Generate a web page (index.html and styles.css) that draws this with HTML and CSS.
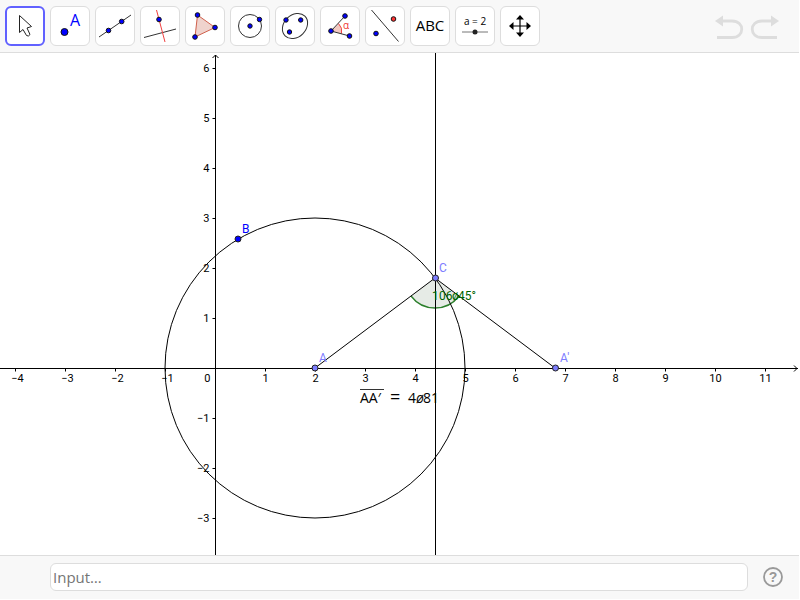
FILE: index.html
```
<!DOCTYPE html>
<html lang="en">

<head>
    <meta charset="UTF-8">
    <meta name="viewport" content="width=device-width, initial-scale=1.0">
    <title>Geometry</title>
    <link rel="stylesheet" href="styles.css">
</head>

<body>
    <header class="toolbar">
        <div class="tools">
            <button type="button" class="tool selected" aria-label="Move">
                <svg viewBox="0 0 40 40"><path d="M14.500 9.500V26.500L18 23.500L21.500 29.500Q23.500 31 25 28.500L22 22L26.500 20.500Z" fill="#fff" stroke="#222" /></svg>
            </button>
            <button type="button" class="tool" aria-label="Point">
                <svg viewBox="0 0 40 40"><circle class="dot" cx="14.500" cy="26" r="3.500" /><text class="icon-a" x="20" y="20">A</text></svg>
            </button>
            <button type="button" class="tool" aria-label="Line">
                <svg viewBox="0 0 40 40"><path class="thin" d="M4 31L36 9" /><circle class="dot" cx="13.500" cy="24.500" r="2.300" /><circle class="dot" cx="26.700" cy="15.500" r="2.300" /></svg>
            </button>
            <button type="button" class="tool" aria-label="Perpendicular line">
                <svg viewBox="0 0 40 40"><path class="thin" d="M4 31.500L36 23" /><path class="thin red" d="M16.500 4L25 36" /><circle class="dot" cx="19" cy="13.500" r="2.300" /></svg>
            </button>
            <button type="button" class="tool" aria-label="Polygon">
                <svg viewBox="0 0 40 40"><path d="M12.500 9L30 21.500L10 31Z" fill="#efd3cd" stroke="#d0604c" /><circle class="dot" cx="12.500" cy="9" r="2.300" /><circle class="dot" cx="30" cy="21.500" r="2.300" /><circle class="dot" cx="10" cy="31" r="2.300" /></svg>
            </button>
            <button type="button" class="tool" aria-label="Circle">
                <svg viewBox="0 0 40 40"><circle class="thin" cx="20" cy="20" r="11.500" /><circle class="dot" cx="20" cy="20" r="2.200" /><circle class="dot" cx="29.500" cy="13.500" r="2.200" /></svg>
            </button>
            <button type="button" class="tool" aria-label="Ellipse">
                <svg viewBox="0 0 40 40"><ellipse class="thin" cx="20" cy="20" rx="14" ry="11" transform="rotate(-45 20 20)" /><circle class="dot" cx="11" cy="14" r="2.200" /><circle class="dot" cx="25.700" cy="14" r="2.200" /><circle class="dot" cx="14.500" cy="26" r="2.200" /></svg>
            </button>
            <button type="button" class="tool" aria-label="Angle">
                <svg viewBox="0 0 40 40"><path d="M11 25L18.500 17.500A11 11 0 0 1 21.500 27.700Z" fill="#f3c9c2" /><path class="thin red" d="M18.500 17.500A11 11 0 0 1 21.500 27.700" /><path class="thin" d="M25 10L11 25L29.500 30" /><circle class="dot" cx="25" cy="10" r="2.300" /><circle class="dot" cx="11" cy="25" r="2.300" /><circle class="dot" cx="29.500" cy="30" r="2.300" /><text class="icon-alpha" x="23" y="23">α</text></svg>
            </button>
            <button type="button" class="tool" aria-label="Reflect about line">
                <svg viewBox="0 0 40 40"><path class="thin" d="M6.500 4L33.500 35.500" /><circle class="dot" cx="11" cy="27.500" r="2.300" /><circle class="dot dot-red" cx="28.500" cy="13" r="2.300" /></svg>
            </button>
            <button type="button" class="tool" aria-label="Text">
                <svg viewBox="0 0 40 40"><text class="icon-abc" x="20" y="25">ABC</text></svg>
            </button>
            <button type="button" class="tool" aria-label="Slider">
                <svg viewBox="0 0 40 40"><text class="icon-slider" x="20" y="19">a = 2</text><path d="M7 26H33" stroke="#777" /><circle cx="20" cy="26" r="2.500" fill="#222" /></svg>
            </button>
            <button type="button" class="tool" aria-label="Move graphics view">
                <svg viewBox="0 0 40 40"><path d="M20 13V27M13 20H27" stroke="#000" stroke-width="1.200" /><path d="M20 9L24 13.500H16ZM20 31L24 26.500H16ZM9 20L13.500 16V24ZM31 20L26.500 16V24Z" /></svg>
            </button>
        </div>
        <div class="history">
            <button type="button" class="history-button" aria-label="Undo">
                <svg viewBox="0 0 30 26"><path d="M8 8H18C31 8 31 24.500 18 24.500H3" fill="none" stroke="#ddd" stroke-width="2.800" /><path d="M1 8L9 2.500V13.500Z" fill="#ddd" /></svg>
            </button>
            <button type="button" class="history-button" aria-label="Redo">
                <svg viewBox="0 0 30 26"><g transform="translate(30 0) scale(-1 1)"><path d="M8 8H18C31 8 31 24.500 18 24.500H3" fill="none" stroke="#ddd" stroke-width="2.800" /><path d="M1 8L9 2.500V13.500Z" fill="#ddd" /></g></svg>
            </button>
        </div>
    </header>

    <main class="graphics">
        <svg class="view" id="view" role="img" aria-label="Graphics view">
            <!-- one unit is 50px, the origin is at 215, 315 -->
            <g id="axes"></g>
            <svg x="215" y="315" overflow="visible">
                <path d="M220 -90L196 -72A30 30 0 0 0 244 -72Z" fill="#e6ebe6" />
                <path d="M196 -72A30 30 0 0 0 244 -72" fill="none" stroke="#2b7f2b" stroke-width="1.300" />
                <circle class="shape" cx="100" cy="0" r="150" />
                <path class="shape" d="M220.500 -400V300M100 0L220 -90L340 0" />
                <text class="angle" y="-68"><tspan x="217">1</tspan><tspan x="224">06</tspan><tspan x="237">ø</tspan><tspan x="243">45°</tspan></text>
                <circle class="point" cx="100" cy="0" r="3" />
                <circle class="point" cx="340.500" cy="0" r="3" />
                <circle class="point" cx="220.500" cy="-90" r="3" />
                <circle class="point free" cx="23" cy="-129" r="3" />
                <text class="name" x="104" y="-6">A</text>
                <text class="name" x="345" y="-6">A'</text>
                <text class="name" x="224" y="-96">C</text>
                <text class="name name-free" x="27" y="-135">B</text>
                <path d="M145 21.500H169" stroke="#333" />
                <text class="distance" y="35"><tspan x="145">AA′</tspan><tspan x="175" class="equals">=</tspan><tspan x="193">4</tspan><tspan x="201" class="decimal">ø</tspan><tspan x="208">81</tspan></text>
            </svg>
        </svg>
    </main>

    <footer class="input-bar">
        <input type="text" class="command" placeholder="Input…" aria-label="Input">
        <button type="button" class="help" aria-label="Help">
            <svg viewBox="0 0 20 20"><circle cx="10" cy="10" r="9" fill="none" stroke="#999" stroke-width="1.800" /><text class="icon-help" x="10" y="15">?</text></svg>
        </button>
    </footer>

    <script src="script.js"></script>
</body>

</html>
```
FILE: styles.css
```
html,
body {
    height: 100%;
}

body {
    box-sizing: border-box;
    display: flex;
    flex-direction: column;
    margin: 0;
    padding: 0 1px 1px 0;
    font-family: Roboto, "Noto Sans", sans-serif;
    background: #fff;
    color: #000;
}

button {
    padding: 0;
    border: none;
    background: none;
}

.toolbar {
    display: flex;
    justify-content: space-between;
    align-items: center;
    padding: 6px 19px 6px 5px;
    border-bottom: 1px solid #ddd;
    background: #f8f8f8;
}

.tools {
    display: flex;
    gap: 5px;
}

.tool {
    box-sizing: border-box;
    display: grid;
    place-items: center;
    width: 40px;
    height: 40px;
    border: 1px solid #ddd;
    border-radius: 6px;
    background: #fff;
}

.tool.selected {
    border: 2px solid #6161ff;
}

.tool svg {
    display: block;
    width: 40px;
    height: 40px;
    margin: -2px;
    font-family: "Open Sans", sans-serif;
}

.thin {
    fill: none;
    stroke: #333;
    stroke-width: 1;
}

.red {
    stroke: #f04040;
}

.dot {
    fill: #00f;
    stroke: #111;
    stroke-width: 1;
}

.dot-red {
    fill: #f33;
}

.icon-a {
    font-size: 16px;
    fill: #00f;
}

.icon-alpha {
    font-size: 10px;
    fill: #f03030;
}

.icon-abc {
    font-size: 15px;
    text-anchor: middle;
}

.icon-slider {
    font-size: 10px;
    text-anchor: middle;
}

.history {
    display: flex;
    gap: 6px;
}

.history-button svg {
    display: block;
    width: 30px;
    height: 26px;
}

.graphics {
    flex: 1;
    min-height: 0;
}

.view {
    display: block;
    width: 100%;
    height: 100%;
}

.axis,
.shape {
    fill: none;
    stroke: #000;
    stroke-width: 1;
}

.label {
    font-size: 11px;
    text-anchor: middle;
}

.label-y {
    text-anchor: end;
}

.point {
    fill: #7d7dff;
    stroke: #222;
    stroke-width: 1;
}

.free {
    fill: #00f;
}

.name {
    font-size: 12px;
    fill: #7d7dff;
}

.name-free {
    fill: #00f;
}

.angle {
    font-size: 12px;
    fill: #006400;
}

.distance {
    font-family: "Open Sans", sans-serif;
    font-size: 14px;
}

.equals {
    font-size: 18px;
}

.decimal {
    font-style: italic;
}

.input-bar {
    display: flex;
    align-items: center;
    gap: 15px;
    padding: 7px 16px 8px 50px;
    border-top: 1px solid #ddd;
    background: #f8f8f8;
}

.command {
    box-sizing: border-box;
    flex: 1;
    min-width: 0;
    height: 28px;
    padding: 0 2px;
    border: 1px solid #ddd;
    border-radius: 6px;
    font-family: "Open Sans", sans-serif;
    font-size: 15px;
    background: #fff;
}

.command::placeholder {
    color: #757575;
}

.help svg {
    display: block;
    width: 20px;
    height: 20px;
}

.icon-help {
    font-size: 14px;
    font-weight: 700;
    text-anchor: middle;
    fill: #999;
}
```
FILE: script.js
```
var unit = 50;
var originX = 215;
var originY = 315;

function add(parent, name, attributes, text) {
    var element = document.createElementNS("http://www.w3.org/2000/svg", name);
    for (var key in attributes) {
        element.setAttribute(key, attributes[key]);
    }
    if (text !== undefined) {
        element.textContent = text;
    }
    parent.appendChild(element);
}

function drawAxes() {
    var view = document.getElementById("view");
    var axes = document.getElementById("axes");
    var width = view.clientWidth;
    var height = view.clientHeight;
    var x = originX + 0.5;
    var y = originY + 0.5;
    var i, position;

    axes.replaceChildren();
    add(axes, "path", { "class": "axis", d: `M0 ${y}H${width - 1}m-4 -3l3 3l-3 3` });
    add(axes, "path", { "class": "axis", d: `M${x} ${height}V2m-3 3l3 -3l3 3` });

    // Horizontal axis
    for (i = Math.ceil(-originX / unit); originX + i * unit < width - 10; i++) {
        position = x + i * unit;
        if (i === 0) {
            add(axes, "text", { "class": "label label-y", x: x - 5, y: y + 13 }, "0");
            continue;
        }
        add(axes, "path", { "class": "axis", d: `M${position} ${y}v3` });
        add(axes, "text", { "class": "label", x: i < 0 ? position + 2 : position, y: y + 13 }, i < 0 ? "−" + -i : i);
    }

    // Vertical axis
    for (i = Math.ceil((originY - height) / unit); originY - i * unit > 10; i++) {
        if (i === 0) {
            continue;
        }
        position = y - i * unit;
        add(axes, "path", { "class": "axis", d: `M${x} ${position}h-3` });
        add(axes, "text", { "class": "label label-y", x: x - 6, y: position + 3 }, i < 0 ? "−" + -i : i);
    }
}

window.addEventListener("resize", drawAxes);
drawAxes();
```
